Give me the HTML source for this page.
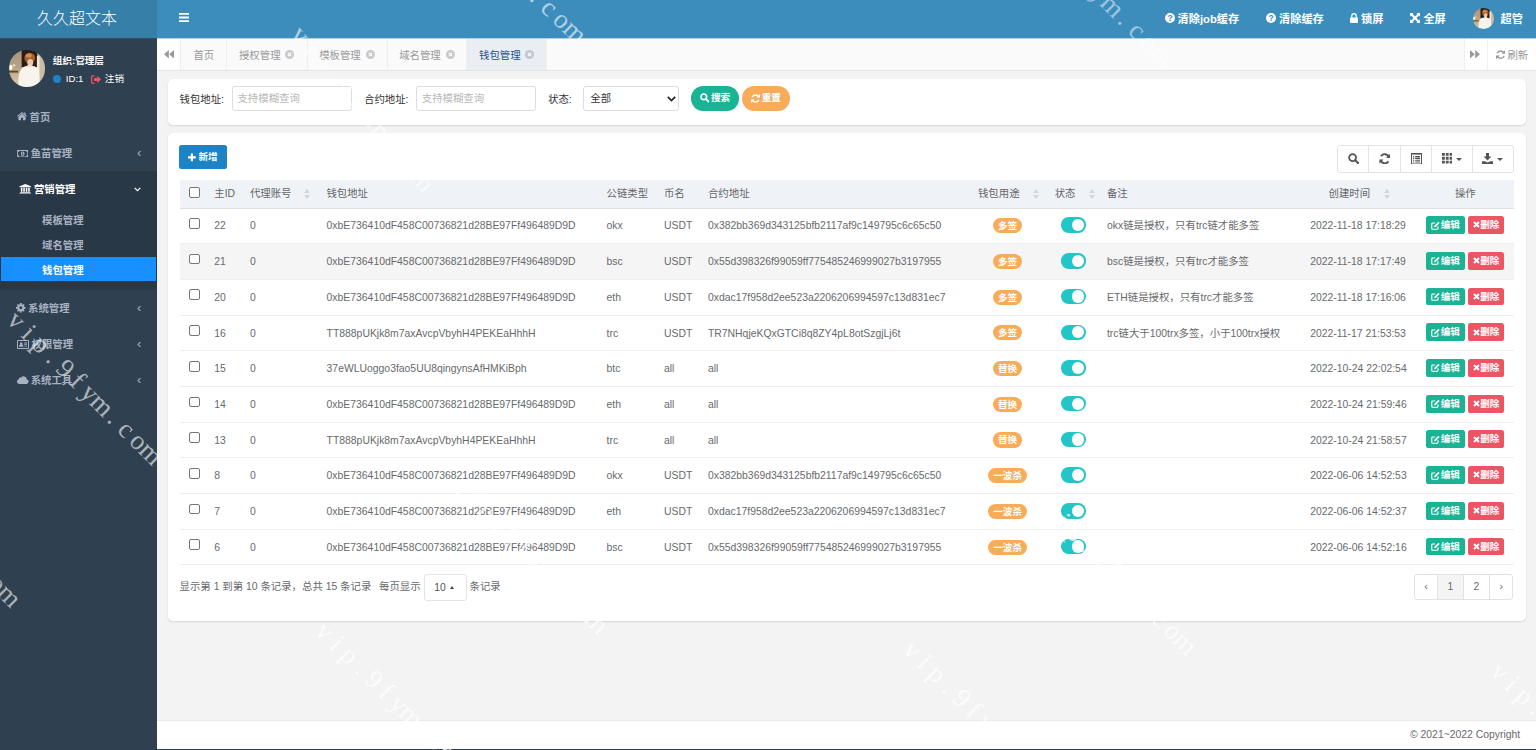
<!DOCTYPE html>
<html lang="zh-CN">
<head>
<meta charset="utf-8">
<title>久久超文本</title>
<style>
*{box-sizing:border-box;margin:0;padding:0}
html,body{width:1536px;height:750px;overflow:hidden}
body{font-family:"Liberation Sans","Noto Sans CJK SC",sans-serif;font-size:12px;color:#676a6c;background:#f3f3f4;position:relative}
svg{display:block}
.abs{position:absolute}
/* sidebar */
#side{position:absolute;left:0;top:0;width:157px;height:750px;background:#2f4050;overflow:hidden}
#logo{position:absolute;left:0;top:0;width:157px;height:38.400px;background:#367fa9;color:#fff;font-size:16px;font-weight:300;line-height:38.800px;text-align:center;padding-right:3px}
#user{position:absolute;left:0;top:38px;width:157px;height:60px}
#avatar{position:absolute;left:8.700px;top:12.300px;width:36.400px;height:36.400px;border-radius:50%;overflow:hidden}
#uname{position:absolute;left:52.800px;top:15.500px;color:#fff;font-weight:bold;font-size:9.600px;line-height:14px;white-space:nowrap}
#uinfo{position:absolute;left:52.800px;top:34.300px;width:100px;height:14px;color:#fff;font-size:9.600px;line-height:14px;white-space:nowrap}
#uinfo .dot{position:absolute;left:0;top:3px;width:8px;height:8px;border-radius:50%;background:#1c84c6}
.mi{position:absolute;left:0;width:157px;height:36px;color:#a7b1c2;font-weight:bold;font-size:10.400px;line-height:38px;white-space:nowrap}
.mi .ic{position:absolute}
.mi .tx{position:absolute;top:0}
.mi .ar{position:absolute;left:137px;top:-1px;font-weight:normal;font-size:13px;font-family:"Liberation Sans",sans-serif}
#open{position:absolute;left:0;top:171px;width:157px;height:119px;background:#293846}
.sub{position:absolute;left:0;width:157px;height:24.500px;line-height:26.300px;color:#a7b1c2;font-weight:bold;font-size:10.400px;padding-left:42px;white-space:nowrap}
.sub.on{left:1px;width:154.500px;padding-left:41px;background:#1890ff;color:#fff}
/* header */
#top{position:absolute;left:157px;top:0;width:1379px;height:38.400px;background:#3c8dbc;color:#fff}
.tl{position:absolute;top:0;height:38px;line-height:38.500px;font-size:11.200px;font-weight:bold;color:#fff;white-space:nowrap}
/* tabs */
#tabs{position:absolute;left:157px;top:38.400px;width:1379px;height:32.300px;background:#fafafa;border-bottom:1px solid #e4e4e4}
.tb{position:absolute;top:0;height:31.300px;line-height:35.400px;background:#fafafa;border-right:1px solid #f0f0f0;color:#999;font-size:10.400px;white-space:nowrap;text-align:center}
.tb.t4{text-align:left;padding-left:12.600px}
.tb.t4 .x{position:absolute;left:58px;top:11.500px}
.tb.t4.on .x{left:58.400px}
.tb.on{background:#eaedf1;color:#23508e}
/* cards */
.card{position:absolute;background:#fff;border-radius:5px;box-shadow:0 1px 2px rgba(0,0,0,.13)}
.lb{position:absolute;top:8px;height:24px;line-height:26px;color:#333;font-size:10.400px;white-space:nowrap}
.inp{position:absolute;top:7.700px;height:24.400px;width:120px;border:1px solid #ddd;border-radius:3px;background:#fff;color:#b8b8b8;font-size:10.400px;line-height:23.500px;padding-left:4.800px;white-space:nowrap}
.pill{position:absolute;top:7.700px;height:24.400px;border-radius:12.200px;color:#fff;font-size:9.600px;font-weight:bold;line-height:23px;white-space:nowrap}
/* table */
.nb{position:absolute;left:11.700px;top:12.700px;width:47.600px;height:23.500px;border-radius:2.500px;background:#1c84c6;color:#fff;font-size:9.600px;font-weight:bold;line-height:23px;white-space:nowrap}
#tools{position:absolute;left:1169.500px;top:12.500px;width:176.800px;height:28px;border:1px solid #e3e3e3;border-radius:3px;background:#fff}
#tools>div{position:absolute;top:0;height:26px;border-right:1px solid #e3e3e3}
.ct{position:absolute;top:11.600px;width:0;height:0;border-left:3px solid transparent;border-right:3px solid transparent;border-top:3.500px solid #555}
#tbl{position:absolute;left:12.100px;top:47.700px;width:1334px;height:386px}
.th{position:absolute;left:0;top:0;width:1334px;height:28.400px;background:#eff3f8;border-bottom:1.400px solid #dde0e4;z-index:1}
.th span{position:absolute;top:0;line-height:28.200px;color:#666;white-space:nowrap;font-size:10.400px}
.tr{position:absolute;left:0;width:1334px;height:35.710px;border-bottom:1px solid #eceef0}
.tr.alt{background:#f5f5f5}
.tr span{position:absolute;top:0;line-height:35px;white-space:nowrap;color:#676a6c;font-size:10.400px}
.cb{position:absolute;left:9.700px;width:10.600px;height:10.600px;border:1px solid #767676;border-radius:2px;background:#fff}
.bdg{position:absolute;top:9.800px;height:15.200px;border-radius:7.600px;background:#f8ac59;color:#fff;font-size:9.600px;font-weight:bold;line-height:15.400px;text-align:center;white-space:nowrap}
.tg{position:absolute;left:881.900px;top:9.100px;width:24.200px;height:15.400px;border-radius:7.700px;background:#23c6c8}
.tg i{position:absolute;right:1.600px;top:1.600px;width:12.200px;height:12.200px;border-radius:50%;background:#fff}
.be,.bd{position:absolute;top:7.800px;height:17.800px;border-radius:2.600px;color:#fff;font-size:9.600px;font-weight:bold;line-height:18.200px;white-space:nowrap;padding-left:14.700px}
.be{left:1246.400px;width:38.600px;background:#1ab394}
.bd{left:1288.200px;width:36px;background:#ed5565;padding-left:12.500px}
.bi{position:absolute;left:5px;top:5.300px}
.so{position:absolute;top:8.700px;width:6px;height:11px}
.so:before,.so:after{content:"";position:absolute;left:0;border-left:3px solid transparent;border-right:3px solid transparent}
.so:before{top:0;border-bottom:4.800px solid #d3d7dd}
.so:after{top:6.200px;border-top:4.800px solid #d3d7dd}
.pg{position:absolute;top:442px;height:26.500px;line-height:24px;font-size:10.400px;color:#676a6c;white-space:nowrap}
#psz{position:absolute;left:256px;top:441.600px;width:43px;height:27px;border:1px solid #e3e3e3;border-radius:3px;background:#fff;font-size:10.400px;line-height:25px;color:#555}
.cu{position:absolute;left:25.700px;top:11.200px;width:0;height:0;border-left:2.800px solid transparent;border-right:2.800px solid transparent;border-bottom:3.200px solid #444}
#pager{position:absolute;left:1246.800px;top:441px;width:99.200px;height:26.400px;border:1px solid #e2e2e2;border-radius:3px;background:#fff;overflow:hidden}
#pager span{position:absolute;top:0;height:24.500px;line-height:23.500px;text-align:center;border-right:1px solid #e2e2e2;color:#676a6c;font-size:10.400px}
#pager span.on{background:#f4f4f4}
#foot{position:absolute;left:157px;top:719.700px;width:1379px;height:30.300px;background:#fff;border-top:1px solid #e7eaec;border-bottom:1.400px solid #2f4050;color:#676a6c;font-size:10.400px;line-height:27px;text-align:right;padding-right:15.800px}
.wm{position:absolute;font-family:"Liberation Serif","Noto Serif CJK SC",serif;font-size:27px;color:#fff;white-space:nowrap;transform-origin:0 0;transform:rotate(52deg);letter-spacing:2.5px;pointer-events:none}
</style>
</head>
<body>
<div id="side">
  <div id="logo">久久超文本</div>
  <div id="user">
    <div id="avatar"><svg width="36.400" height="36.400" viewBox="0 0 36 36"><defs><filter id="bl" x="-10%" y="-10%" width="120%" height="120%"><feGaussianBlur stdDeviation="0.7"/></filter><linearGradient id="avl" x1="0" y1="0" x2="0" y2="1"><stop offset="0" stop-color="#a8937a"/><stop offset=".5" stop-color="#b9a386"/><stop offset="1" stop-color="#e3d0b3"/></linearGradient><g id="avg" filter="url(#bl)"><rect x="-2" y="-2" width="40" height="40" fill="url(#avl)"/><rect x="12.500" y="-2" width="16" height="19" fill="#2a1f17"/><rect x="28" y="-2" width="10" height="40" fill="#cbbda4"/><rect x="27.600" y="6" width="2.600" height="16" fill="#efe7d4"/><rect x="-2" y="20.500" width="11" height="1.800" fill="#5b4732"/><ellipse cx="1.800" cy="17.300" rx="1.700" ry="2.600" fill="#fffdf0"/><ellipse cx="5" cy="15.200" rx="1.300" ry="1.200" fill="#f3e2b0"/><ellipse cx="20.500" cy="8" rx="5.300" ry="5.400" fill="#a85f2c"/><ellipse cx="19.500" cy="5.500" rx="3" ry="2" fill="#c98d60"/><ellipse cx="21" cy="12.400" rx="2.900" ry="3.500" fill="#e8c6ad"/><path d="M9.400 38C8.800 27 9.800 18.500 15 16.600 18 15.300 24 15.400 27 17 31 19 30.600 28 30 38Z" fill="#f7f4ec"/><path d="M17.500 16.500C18 14 23 14 23.500 16.500" fill="#f1dccb"/></g></defs><use href="#avg"/></svg></div>
    <div id="uname">组织:管理层</div>
    <div id="uinfo"><i class="dot"></i><span style="position:absolute;left:13px;top:0">ID:1</span><svg style="position:absolute;left:38px;top:3px" width="10" height="9" viewBox="0 0 10 9"><path d="M3.6 0.2H1.6C.7.2 0 .9 0 1.8v5.4C0 8.100.7 8.800 1.600 8.800h2V7.500H1.700c-.3 0-.5-.2-.5-.5V2c0-.3.2-.5.5-.5h1.900z" fill="#ed5565"/><path d="M6.300.8 10 4.500 6.300 8.200V6H3V3h3.300z" fill="#ed5565"/></svg><span style="position:absolute;left:52px;top:0">注销</span></div>
  </div>
  <div class="mi" style="top:99px"><svg class="ic" style="left:16.600px;top:13.400px" width="10" height="8.200" viewBox="0 0 11 9"><path d="M5.500 1.900 1.500 5.100V8.500c0 .3.200.5.500.5H4.400V6.200H6.600V9H9c.3 0 .5-.2.500-.5V5.100z" fill="#a7b1c2"/><path d="M5.500 0 0 4.400l.7.900L5.500 1.500l4.800 3.800.7-.9L9.400 3.100V.6H7.900V1.900z" fill="#a7b1c2"/></svg><span class="tx" style="left:29.500px">首页</span></div>
  <div class="mi" style="top:135px"><svg class="ic" style="left:16.600px;top:14.600px" width="11.400" height="7.400" viewBox="0 0 12 8"><path d="M0 0h12v8H0zM1 2.200V5.800C1.700 5.800 2.200 6.300 2.200 7H9.800C9.800 6.300 10.300 5.800 11 5.800V2.200C10.300 2.200 9.800 1.700 9.800 1H2.200C2.200 1.700 1.700 2.200 1 2.200z" fill="#a7b1c2" fill-rule="evenodd"/><ellipse cx="6" cy="4" rx="2" ry="2.500" fill="#a7b1c2"/><path d="M5.400 2.800h.9v2.100h.5v.6H5.200v-.6h.5V3.600h-.5z" fill="#2f4050"/></svg><span class="tx" style="left:30.700px">鱼苗管理</span><span class="ar">&#8249;</span></div>
  <div id="open"></div>
  <div class="mi" style="top:171px;color:#fff"><svg class="ic" style="left:18.700px;top:13.200px" width="12.600" height="10.200" viewBox="0 0 13 11"><path d="M6.500 0 13 2.600V3.400H0V2.600zM1.700 4.100H3.400V8.500H1.700zM4.300 4.100H6V8.500H4.300zM7 4.100H8.700V8.500H7zM9.600 4.100H11.300V8.500H9.600zM.9 9H12.100V9.800H.9zM0 10.200H13V11H0z" fill="#fff"/></svg><span class="tx" style="left:33.900px">营销管理</span><svg class="abs" style="left:134px;top:15.500px" width="7" height="5" viewBox="0 0 7 5"><path d="M.7.900 3.500 3.700 6.300.9" fill="none" stroke="#fff" stroke-width="1.200"/></svg></div>
  <div class="sub" style="top:207.800px">模板管理</div>
  <div class="sub" style="top:232.500px">域名管理</div>
  <div class="sub on" style="top:256.500px;height:24.900px;line-height:27px">钱包管理</div>
  <div class="mi" style="top:290px"><svg class="ic" style="left:16.300px;top:13.200px" width="9.600" height="9.600" viewBox="0 0 9 9"><path d="M3.700 0H5.300L5.500 1.200 6.300 1.600 7.300.9 8.100 1.700 7.400 2.700 7.800 3.500 9 3.700V5.300L7.800 5.500 7.400 6.300 8.100 7.300 7.300 8.100 6.300 7.400 5.500 7.800 5.300 9H3.700L3.500 7.800 2.700 7.400 1.700 8.100.9 7.300 1.600 6.300 1.200 5.500 0 5.300V3.700L1.200 3.500 1.600 2.700.9 1.700 1.700.9 2.700 1.600 3.500 1.200zM4.500 3.100A1.400 1.400 0 1 0 4.500 5.900 1.400 1.400 0 1 0 4.500 3.100z" fill="#a7b1c2" fill-rule="evenodd"/></svg><span class="tx" style="left:28px">系统管理</span><span class="ar">&#8249;</span></div>
  <div class="mi" style="top:326px"><svg class="ic" style="left:16.500px;top:13.500px" width="12" height="9" viewBox="0 0 12 9"><path d="M.8 0H11.200C11.600 0 12 .4 12 .8V8.200C12 8.600 11.600 9 11.200 9H.8C.4 9 0 8.600 0 8.200V.8C0 .4.400 0 .8 0zM1 1V8H11V1z" fill="#a7b1c2" fill-rule="evenodd"/><path d="M2 6.800C2 5.300 2.600 4.800 3.300 4.600A1.300 1.300 0 1 1 5.100 4.600C5.800 4.800 6.400 5.300 6.400 6.800zM7.200 2.600H10V3.400H7.200zM7.200 4.200H10V5H7.200zM7.200 5.800H10V6.600H7.200z" fill="#a7b1c2"/></svg><span class="tx" style="left:31.500px">权限管理</span><span class="ar">&#8249;</span></div>
  <div class="mi" style="top:362px"><svg class="ic" style="left:16.500px;top:14px" width="12" height="8" viewBox="0 0 12 8"><path d="M9.700 3.300A2.400 2.400 0 0 1 9.600 8H2.400A2.400 2.400 0 0 1 1.700 3.300 2 2 0 0 1 4.200 1.600 3 3 0 0 1 9.700 3.300z" fill="#a7b1c2"/></svg><span class="tx" style="left:30.700px">系统工具</span><span class="ar">&#8249;</span></div>
</div>
<div id="top">
  <svg class="abs" style="left:21.700px;top:13px" width="10.500" height="9" viewBox="0 0 11 9" preserveAspectRatio="none"><path d="M0 0H11V1.800H0zM0 3.600H11V5.400H0zM0 7.200H11V9H0z" fill="#fff"/></svg>
  <svg class="abs" style="left:1007.600px;top:13.300px" width="10" height="10" viewBox="0 0 10 10"><circle cx="5" cy="5" r="5" fill="#fff"/><text x="5" y="8.300" font-size="8.500" font-weight="bold" text-anchor="middle" fill="#3c8dbc" font-family="Liberation Sans,sans-serif">?</text></svg>
  <span class="tl" style="left:1020.600px">清除job缓存</span>
  <svg class="abs" style="left:1109px;top:13.300px" width="10" height="10" viewBox="0 0 10 10"><circle cx="5" cy="5" r="5" fill="#fff"/><text x="5" y="8.300" font-size="8.500" font-weight="bold" text-anchor="middle" fill="#3c8dbc" font-family="Liberation Sans,sans-serif">?</text></svg>
  <span class="tl" style="left:1122px">清除缓存</span>
  <svg class="abs" style="left:1193px;top:12.800px" width="8" height="10" viewBox="0 0 8 10"><path d="M0 4.500H8V9.300C8 9.700 7.700 10 7.300 10H.7C.3 10 0 9.700 0 9.300z" fill="#fff"/><path d="M1.800 4.800V2.900A2.200 2.200 0 0 1 6.200 2.900V4.800" fill="none" stroke="#fff" stroke-width="1.300"/></svg>
  <span class="tl" style="left:1204px">锁屏</span>
  <svg class="abs" style="left:1253px;top:13.200px" width="10" height="10" viewBox="0 0 10 10"><path d="M0 0H3.600L2.500 1.100 5 3.600 7.500 1.100 6.400 0H10V3.600L8.900 2.500 6.400 5 8.900 7.500 10 6.400V10H6.400L7.500 8.900 5 6.400 2.500 8.900 3.600 10H0V6.400L1.100 7.500 3.600 5 1.100 2.500 0 3.600z" fill="#fff"/></svg>
  <span class="tl" style="left:1266.400px">全屏</span>
  <div class="abs" style="left:1315.600px;top:7.900px;width:21.600px;height:21.600px;border-radius:50%;overflow:hidden"><svg width="21.600" height="21.600" viewBox="0 0 36 36"><use href="#avg"/></svg></div>
  <span class="tl" style="left:1343.500px">超管</span>
</div>
<div class="abs" style="left:0;top:38px;width:157px;height:1px;background:#32597a;opacity:.5"></div><div class="abs" style="left:157px;top:38px;width:1379px;height:1px;background:#b1d1e4;z-index:2"></div>
<div id="tabs">
  <div class="tb" style="left:0;width:24.200px;background:#fff"><svg class="abs" style="left:7.200px;top:11.800px" width="10" height="8.500" viewBox="0 0 10 8.500"><path d="M4.800 0V8.500L0 4.250zM10 0V8.500L5.200 4.250z" fill="#999"/></svg></div>
  <div class="tb" style="left:24.200px;width:46.200px">首页</div>
  <div class="tb t4" style="left:70.400px;width:80.200px;padding-left:11.600px"><span>授权管理</span><svg class="x" width="9" height="9" viewBox="0 0 9 9"><circle cx="4.500" cy="4.500" r="4.500" fill="#c9c9c9"/><path d="M2.900 2.900 6.100 6.100M6.100 2.900 2.900 6.100" stroke="#fff" stroke-width="1.200"/></svg></div>
  <div class="tb t4" style="left:150.600px;width:80px;padding-left:11.600px"><span>模板管理</span><svg class="x" width="9" height="9" viewBox="0 0 9 9"><circle cx="4.500" cy="4.500" r="4.500" fill="#c9c9c9"/><path d="M2.900 2.900 6.100 6.100M6.100 2.900 2.900 6.100" stroke="#fff" stroke-width="1.200"/></svg></div>
  <div class="tb t4" style="left:230.600px;width:79.600px;padding-left:11.600px"><span>域名管理</span><svg class="x" width="9" height="9" viewBox="0 0 9 9"><circle cx="4.500" cy="4.500" r="4.500" fill="#c9c9c9"/><path d="M2.900 2.900 6.100 6.100M6.100 2.900 2.900 6.100" stroke="#fff" stroke-width="1.200"/></svg></div>
  <div class="tb t4 on" style="left:310px;width:80px;padding-left:12px"><span>钱包管理</span><svg class="x" width="9" height="9" viewBox="0 0 9 9"><circle cx="4.500" cy="4.500" r="4.500" fill="#c3c8d0"/><path d="M2.900 2.900 6.100 6.100M6.100 2.900 2.900 6.100" stroke="#fff" stroke-width="1.200"/></svg></div>
  <div class="tb" style="left:1306.600px;width:24.800px;border-left:1px solid #eee;background:#fff"><svg class="abs" style="left:5.800px;top:11.800px" width="10" height="8.500" viewBox="0 0 10 8.500"><path d="M0 0V8.500L4.800 4.250zM5.200 0V8.500L10 4.250z" fill="#999"/></svg></div>
  <div class="tb" style="left:1331.400px;width:47.600px;border-right:0;background:#fff"><svg class="abs" style="left:7.500px;top:11.700px" width="9.300" height="9.300" viewBox="0 0 10 10"><path d="M8.600 3.300A4 4 0 0 0 1.300 3.600M1.400 6.700A4 4 0 0 0 8.700 6.400" fill="none" stroke="#999" stroke-width="1.500"/><path d="M10 0V4H6zM0 10V6H4z" fill="#999"/></svg><span class="abs" style="left:19px;top:0">刷新</span></div>
</div>
<div class="card" id="c1" style="left:167.500px;top:78.800px;width:1358px;height:46.200px">
  <span class="lb" style="left:12px">钱包地址:</span>
  <div class="inp" style="left:64.200px">支持模糊查询</div>
  <span class="lb" style="left:196.500px">合约地址:</span>
  <div class="inp" style="left:248.500px">支持模糊查询</div>
  <span class="lb" style="left:380.500px">状态:</span>
  <div class="inp" style="left:415.500px;width:95.800px;color:#333;padding-left:6.300px">全部<svg class="abs" style="left:83px;top:8.500px" width="9" height="6" viewBox="0 0 9 6"><path d="M.8.900 4.500 4.600 8.200.9" fill="none" stroke="#222" stroke-width="1.700"/></svg></div>
  <div class="pill" style="left:523.300px;width:48.400px;background:#1ab394"><svg class="abs" style="left:8.800px;top:7px" width="9.500" height="9.500" viewBox="0 0 10 10"><circle cx="4" cy="4" r="3" fill="none" stroke="#fff" stroke-width="1.700"/><path d="M6.200 6.200 9.300 9.300" stroke="#fff" stroke-width="1.900" stroke-linecap="round"/></svg><span class="abs" style="left:20.200px;top:0">搜索</span></div>
  <div class="pill" style="left:574.800px;width:47.500px;background:#f8ac59"><svg class="abs" style="left:8.500px;top:7.500px" width="9" height="9" viewBox="0 0 10 10"><path d="M8.600 3.300A4 4 0 0 0 1.300 3.600M1.400 6.700A4 4 0 0 0 8.700 6.400" fill="none" stroke="#fff" stroke-width="1.700"/><path d="M10 0V4H6zM0 10V6H4z" fill="#fff"/></svg><span class="abs" style="left:19.400px;top:0">重置</span></div>
</div>
<div class="card" id="c2" style="left:167.500px;top:132.600px;width:1358px;height:488px">
<div class="nb"><svg class="abs" style="left:8.800px;top:5.600px" width="8.200" height="12.800" viewBox="0 0 9 14"><path d="M3.100 4.500V7.500H0V9.900H3.100V12.900H5.500V9.900H8.600V7.500H5.500V4.500z" fill="#fff" transform="translate(0,-1.800)"/></svg><span class="abs" style="left:19.200px;top:0">新增</span></div>
<div id="tools">
  <div style="left:0;width:30.800px"><svg class="abs" style="left:9.800px;top:6.800px" width="11.500" height="11.500" viewBox="0 0 11 11"><circle cx="4.400" cy="4.400" r="3.300" fill="none" stroke="#555" stroke-width="1.700"/><path d="M6.900 6.900 10 10" stroke="#555" stroke-width="2" stroke-linecap="round"/></svg></div>
  <div style="left:30.800px;width:31.800px"><svg class="abs" style="left:10px;top:6.800px" width="11.500" height="11.500" viewBox="0 0 11 11"><path d="M9.400 4.200A4.100 4.100 0 0 0 2 3M1.600 6.800A4.100 4.100 0 0 0 9 8" fill="none" stroke="#555" stroke-width="1.800"/><path d="M10.600.8V4.700H6.700zM.4 10.200V6.300H4.300z" fill="#555"/></svg></div>
  <div style="left:62.600px;width:31.300px"><svg class="abs" style="left:10px;top:6.800px" width="11" height="11.500" viewBox="0 0 11 11.500"><path d="M.5.500H10.500V11H.5z" fill="none" stroke="#555" stroke-width="1"/><path d="M0 0H11V1.600H0z" fill="#555"/><path d="M2 3.600H3.200M4.200 3.600H9M2 5.400H3.200M4.200 5.400H9M2 7.200H3.200M4.200 7.200H9M2 9H3.200M4.200 9H9" stroke="#555" stroke-width="1.100"/></svg></div>
  <div style="left:93.900px;width:40.900px"><svg class="abs" style="left:9.800px;top:7.300px" width="10.500" height="10.500" viewBox="0 0 10 10"><path d="M0 0H2.700V2.700H0zM3.650 0H6.350V2.700H3.650zM7.300 0H10V2.700H7.300zM0 3.650H2.700V6.350H0zM3.650 3.650H6.350V6.350H3.650zM7.300 3.650H10V6.350H7.300zM0 7.300H2.700V10H0zM3.650 7.300H6.350V10H3.650zM7.300 7.300H10V10H7.300z" fill="#555"/></svg><i class="ct" style="left:24.300px"></i></div>
  <div style="left:134.800px;width:40px;border-right:0"><svg class="abs" style="left:9.300px;top:6.600px" width="11" height="11.500" viewBox="0 0 11 11.500"><path d="M4 0H7V3.600H9.400L5.500 7.600 1.600 3.600H4zM0 8.300H2.800L5.500 9.600 8.200 8.300H11V11.500H0z" fill="#555"/></svg><i class="ct" style="left:24.600px"></i></div>
</div>
<div id="tbl">
<div class="th"><i class="cb" style="top:6.800px"></i><span style="left:34.7px">主ID</span><span style="left:70.3px">代理账号</span><i class="so" style="left:124.9px"></i><span style="left:146.8px">钱包地址</span><span style="left:427.0px">公链类型</span><span style="left:484.4px">币名</span><span style="left:528.4px">合约地址</span><span style="left:798.4px">钱包用途</span><i class="so" style="left:853.4px"></i><span style="left:875.1px">状态</span><i class="so" style="left:909.4px"></i><span style="left:927.4px">备注</span><span style="left:1149.0px">创建时间</span><i class="so" style="left:1204.1px"></i><span style="left:1275.4px">操作</span></div>
<div class="tr" style="top:28.10px"><i class="cb" style="top:9.700px"></i><span style="left:34.7px">22</span><span style="left:70.3px">0</span><span style="left:147.0px">0xbE736410dF458C00736821d28BE97Ff496489D9D</span><span style="left:427.0px">okx</span><span style="left:484.4px">USDT</span><span style="left:528.4px">0x382bb369d343125bfb2117af9c149795c6c65c50</span><b class="bdg" style="left:813.3px;width:29.4px">多签</b><i class="tg"><i></i></i><span style="left:927.4px">okx链是授权，只有trc链才能多签</span><span style="left:1130.6px">2022-11-18 17:18:29</span><b class="be"><svg class="bi" style="left:5px;top:4.400px" width="9" height="9" viewBox="0 0 8 8"><path d="M6.200 4.600V6.600C6.200 7 5.900 7.300 5.500 7.300H1.400C1 7.300.700 7 .700 6.600V2.500C.700 2.100 1 1.800 1.400 1.800H3.700" fill="none" stroke="#fff" stroke-width="1"/><path d="M3 4.200 6.600.600 7.700 1.700 4.100 5.300 2.800 5.500z" fill="#fff"/></svg>编辑</b><b class="bd"><svg class="bi" width="7" height="7" viewBox="0 0 7 7"><path d="M1 1 6 6M6 1 1 6" stroke="#fff" stroke-width="1.900"/></svg>删除</b></div>
<div class="tr alt" style="top:63.81px"><i class="cb" style="top:9.700px"></i><span style="left:34.7px">21</span><span style="left:70.3px">0</span><span style="left:147.0px">0xbE736410dF458C00736821d28BE97Ff496489D9D</span><span style="left:427.0px">bsc</span><span style="left:484.4px">USDT</span><span style="left:528.4px">0x55d398326f99059ff775485246999027b3197955</span><b class="bdg" style="left:813.3px;width:29.4px">多签</b><i class="tg"><i></i></i><span style="left:927.4px">bsc链是授权，只有trc才能多签</span><span style="left:1130.6px">2022-11-18 17:17:49</span><b class="be"><svg class="bi" style="left:5px;top:4.400px" width="9" height="9" viewBox="0 0 8 8"><path d="M6.200 4.600V6.600C6.200 7 5.900 7.300 5.500 7.300H1.400C1 7.300.700 7 .700 6.600V2.500C.700 2.100 1 1.800 1.400 1.800H3.700" fill="none" stroke="#fff" stroke-width="1"/><path d="M3 4.200 6.600.600 7.700 1.700 4.100 5.300 2.800 5.500z" fill="#fff"/></svg>编辑</b><b class="bd"><svg class="bi" width="7" height="7" viewBox="0 0 7 7"><path d="M1 1 6 6M6 1 1 6" stroke="#fff" stroke-width="1.900"/></svg>删除</b></div>
<div class="tr" style="top:99.52px"><i class="cb" style="top:9.700px"></i><span style="left:34.7px">20</span><span style="left:70.3px">0</span><span style="left:147.0px">0xbE736410dF458C00736821d28BE97Ff496489D9D</span><span style="left:427.0px">eth</span><span style="left:484.4px">USDT</span><span style="left:528.4px">0xdac17f958d2ee523a2206206994597c13d831ec7</span><b class="bdg" style="left:813.3px;width:29.4px">多签</b><i class="tg"><i></i></i><span style="left:927.4px">ETH链是授权，只有trc才能多签</span><span style="left:1130.6px">2022-11-18 17:16:06</span><b class="be"><svg class="bi" style="left:5px;top:4.400px" width="9" height="9" viewBox="0 0 8 8"><path d="M6.200 4.600V6.600C6.200 7 5.900 7.300 5.500 7.300H1.400C1 7.300.700 7 .700 6.600V2.500C.700 2.100 1 1.800 1.400 1.800H3.700" fill="none" stroke="#fff" stroke-width="1"/><path d="M3 4.200 6.600.600 7.700 1.700 4.100 5.300 2.800 5.500z" fill="#fff"/></svg>编辑</b><b class="bd"><svg class="bi" width="7" height="7" viewBox="0 0 7 7"><path d="M1 1 6 6M6 1 1 6" stroke="#fff" stroke-width="1.900"/></svg>删除</b></div>
<div class="tr" style="top:135.23px"><i class="cb" style="top:9.700px"></i><span style="left:34.7px">16</span><span style="left:70.3px">0</span><span style="left:147.0px">TT888pUKjk8m7axAvcpVbyhH4PEKEaHhhH</span><span style="left:427.0px">trc</span><span style="left:484.4px">USDT</span><span style="left:528.4px">TR7NHqjeKQxGTCi8q8ZY4pL8otSzgjLj6t</span><b class="bdg" style="left:813.3px;width:29.4px">多签</b><i class="tg"><i></i></i><span style="left:927.4px">trc链大于100trx多签，小于100trx授权</span><span style="left:1130.6px">2022-11-17 21:53:53</span><b class="be"><svg class="bi" style="left:5px;top:4.400px" width="9" height="9" viewBox="0 0 8 8"><path d="M6.200 4.600V6.600C6.200 7 5.900 7.300 5.500 7.300H1.400C1 7.300.700 7 .700 6.600V2.500C.700 2.100 1 1.800 1.400 1.800H3.700" fill="none" stroke="#fff" stroke-width="1"/><path d="M3 4.200 6.600.600 7.700 1.700 4.100 5.300 2.800 5.500z" fill="#fff"/></svg>编辑</b><b class="bd"><svg class="bi" width="7" height="7" viewBox="0 0 7 7"><path d="M1 1 6 6M6 1 1 6" stroke="#fff" stroke-width="1.900"/></svg>删除</b></div>
<div class="tr" style="top:170.94px"><i class="cb" style="top:9.700px"></i><span style="left:34.7px">15</span><span style="left:70.3px">0</span><span style="left:147.0px">37eWLUoggo3fao5UU8qingynsAfHMKiBph</span><span style="left:427.0px">btc</span><span style="left:484.4px">all</span><span style="left:528.4px">all</span><b class="bdg" style="left:813.3px;width:29.4px">替换</b><i class="tg"><i></i></i><span style="left:1130.6px">2022-10-24 22:02:54</span><b class="be"><svg class="bi" style="left:5px;top:4.400px" width="9" height="9" viewBox="0 0 8 8"><path d="M6.200 4.600V6.600C6.200 7 5.900 7.300 5.500 7.300H1.400C1 7.300.700 7 .700 6.600V2.500C.700 2.100 1 1.800 1.400 1.800H3.700" fill="none" stroke="#fff" stroke-width="1"/><path d="M3 4.200 6.600.600 7.700 1.700 4.100 5.300 2.800 5.500z" fill="#fff"/></svg>编辑</b><b class="bd"><svg class="bi" width="7" height="7" viewBox="0 0 7 7"><path d="M1 1 6 6M6 1 1 6" stroke="#fff" stroke-width="1.900"/></svg>删除</b></div>
<div class="tr" style="top:206.65px"><i class="cb" style="top:9.700px"></i><span style="left:34.7px">14</span><span style="left:70.3px">0</span><span style="left:147.0px">0xbE736410dF458C00736821d28BE97Ff496489D9D</span><span style="left:427.0px">eth</span><span style="left:484.4px">all</span><span style="left:528.4px">all</span><b class="bdg" style="left:813.3px;width:29.4px">替换</b><i class="tg"><i></i></i><span style="left:1130.6px">2022-10-24 21:59:46</span><b class="be"><svg class="bi" style="left:5px;top:4.400px" width="9" height="9" viewBox="0 0 8 8"><path d="M6.200 4.600V6.600C6.200 7 5.900 7.300 5.500 7.300H1.400C1 7.300.700 7 .700 6.600V2.500C.700 2.100 1 1.800 1.400 1.800H3.700" fill="none" stroke="#fff" stroke-width="1"/><path d="M3 4.200 6.600.600 7.700 1.700 4.100 5.300 2.800 5.500z" fill="#fff"/></svg>编辑</b><b class="bd"><svg class="bi" width="7" height="7" viewBox="0 0 7 7"><path d="M1 1 6 6M6 1 1 6" stroke="#fff" stroke-width="1.900"/></svg>删除</b></div>
<div class="tr" style="top:242.36px"><i class="cb" style="top:9.700px"></i><span style="left:34.7px">13</span><span style="left:70.3px">0</span><span style="left:147.0px">TT888pUKjk8m7axAvcpVbyhH4PEKEaHhhH</span><span style="left:427.0px">trc</span><span style="left:484.4px">all</span><span style="left:528.4px">all</span><b class="bdg" style="left:813.3px;width:29.4px">替换</b><i class="tg"><i></i></i><span style="left:1130.6px">2022-10-24 21:58:57</span><b class="be"><svg class="bi" style="left:5px;top:4.400px" width="9" height="9" viewBox="0 0 8 8"><path d="M6.200 4.600V6.600C6.200 7 5.900 7.300 5.500 7.300H1.400C1 7.300.700 7 .700 6.600V2.500C.700 2.100 1 1.800 1.400 1.800H3.700" fill="none" stroke="#fff" stroke-width="1"/><path d="M3 4.200 6.600.600 7.700 1.700 4.100 5.300 2.800 5.500z" fill="#fff"/></svg>编辑</b><b class="bd"><svg class="bi" width="7" height="7" viewBox="0 0 7 7"><path d="M1 1 6 6M6 1 1 6" stroke="#fff" stroke-width="1.900"/></svg>删除</b></div>
<div class="tr" style="top:278.07px"><i class="cb" style="top:9.700px"></i><span style="left:34.7px">8</span><span style="left:70.3px">0</span><span style="left:147.0px">0xbE736410dF458C00736821d28BE97Ff496489D9D</span><span style="left:427.0px">okx</span><span style="left:484.4px">USDT</span><span style="left:528.4px">0x382bb369d343125bfb2117af9c149795c6c65c50</span><b class="bdg" style="left:808.5px;width:39px">一波杀</b><i class="tg"><i></i></i><span style="left:1130.6px">2022-06-06 14:52:53</span><b class="be"><svg class="bi" style="left:5px;top:4.400px" width="9" height="9" viewBox="0 0 8 8"><path d="M6.200 4.600V6.600C6.200 7 5.900 7.300 5.500 7.300H1.400C1 7.300.700 7 .700 6.600V2.500C.700 2.100 1 1.800 1.400 1.800H3.700" fill="none" stroke="#fff" stroke-width="1"/><path d="M3 4.200 6.600.600 7.700 1.700 4.100 5.300 2.800 5.500z" fill="#fff"/></svg>编辑</b><b class="bd"><svg class="bi" width="7" height="7" viewBox="0 0 7 7"><path d="M1 1 6 6M6 1 1 6" stroke="#fff" stroke-width="1.900"/></svg>删除</b></div>
<div class="tr" style="top:313.78px"><i class="cb" style="top:9.700px"></i><span style="left:34.7px">7</span><span style="left:70.3px">0</span><span style="left:147.0px">0xbE736410dF458C00736821d28BE97Ff496489D9D</span><span style="left:427.0px">eth</span><span style="left:484.4px">USDT</span><span style="left:528.4px">0xdac17f958d2ee523a2206206994597c13d831ec7</span><b class="bdg" style="left:808.5px;width:39px">一波杀</b><i class="tg"><i></i></i><span style="left:1130.6px">2022-06-06 14:52:37</span><b class="be"><svg class="bi" style="left:5px;top:4.400px" width="9" height="9" viewBox="0 0 8 8"><path d="M6.200 4.600V6.600C6.200 7 5.900 7.300 5.500 7.300H1.400C1 7.300.700 7 .700 6.600V2.500C.700 2.100 1 1.800 1.400 1.800H3.700" fill="none" stroke="#fff" stroke-width="1"/><path d="M3 4.200 6.600.600 7.700 1.700 4.100 5.300 2.800 5.500z" fill="#fff"/></svg>编辑</b><b class="bd"><svg class="bi" width="7" height="7" viewBox="0 0 7 7"><path d="M1 1 6 6M6 1 1 6" stroke="#fff" stroke-width="1.900"/></svg>删除</b></div>
<div class="tr" style="top:349.49px"><i class="cb" style="top:9.700px"></i><span style="left:34.7px">6</span><span style="left:70.3px">0</span><span style="left:147.0px">0xbE736410dF458C00736821d28BE97Ff496489D9D</span><span style="left:427.0px">bsc</span><span style="left:484.4px">USDT</span><span style="left:528.4px">0x55d398326f99059ff775485246999027b3197955</span><b class="bdg" style="left:808.5px;width:39px">一波杀</b><i class="tg"><i></i></i><span style="left:1130.6px">2022-06-06 14:52:16</span><b class="be"><svg class="bi" style="left:5px;top:4.400px" width="9" height="9" viewBox="0 0 8 8"><path d="M6.200 4.600V6.600C6.200 7 5.900 7.300 5.500 7.300H1.400C1 7.300.700 7 .700 6.600V2.500C.700 2.100 1 1.800 1.400 1.800H3.700" fill="none" stroke="#fff" stroke-width="1"/><path d="M3 4.200 6.600.600 7.700 1.700 4.100 5.300 2.800 5.500z" fill="#fff"/></svg>编辑</b><b class="bd"><svg class="bi" width="7" height="7" viewBox="0 0 7 7"><path d="M1 1 6 6M6 1 1 6" stroke="#fff" stroke-width="1.900"/></svg>删除</b></div>
</div>
<div class="pg" style="left:12.100px">显示第 1 到第 10 条记录，总共 15 条记录</div>
<div class="pg" style="left:211.500px">每页显示</div>
<div id="psz"><span class="abs" style="left:9.800px;top:0">10</span><i class="cu"></i></div>
<div class="pg" style="left:302px">条记录</div>
<div id="pager"><span style="left:0;width:22.600px">&#8249;</span><span class="on" style="left:22.600px;width:26.200px">1</span><span style="left:48.800px;width:25.700px">2</span><span style="left:74.500px;width:23px;border-right:0">&#8250;</span></div>
</div>
<svg id="wm" width="1536" height="750" viewBox="0 0 1536 750" style="position:absolute;left:0;top:0;pointer-events:none;z-index:9" font-family="Liberation Serif,Noto Serif CJK SC,serif" font-size="27" font-weight="400" fill="#fff" text-anchor="middle"><text transform="translate(14.7,322.0) rotate(44.7)" x="0.0 17.2 34.4 51.6 68.8 86.0 103.2 120.4 137.6 154.8 172.0 189.2" y="6" fill-opacity="0.62">vip.9fym.com</text><text transform="translate(433.5,-100.3) rotate(43.8)" x="0.0 17.6 35.2 52.8 70.4 88.0 105.6 123.2 140.8 158.4 176.0 193.6" y="6" fill-opacity="0.62">vip.9fym.com</text><text transform="translate(1025.0,-78.8) rotate(45)" x="0.0 17.4 34.8 52.2 69.6 87.0 104.4 121.8 139.2 156.6 174.0 191.4" y="6.500" fill-opacity="0.5">vip.9fym.com</text><text transform="translate(-126.8,462.8) rotate(45)" x="0.0 17.3 34.6 51.9 69.2 86.5 103.8 121.1 138.4 155.7 173.0 190.3" y="6" fill-opacity="0.6">vip.9fym.com</text><text transform="translate(323.0,633.0) rotate(44.5)" x="0.0 17.3 34.6 51.9 69.2 86.5 103.8 121.1 138.4 155.7 173.0 190.3" y="6" fill-opacity="0.8">vip.9fym.com</text><text transform="translate(460.4,489.4) rotate(45)" x="0.0 17.3 34.6 51.9 69.2 86.5 103.8 121.1 138.4 155.7 173.0 190.3" y="6" fill-opacity="0.8">vip.9fym.com</text><text transform="translate(910.6,651.6) rotate(44.5)" x="0.0 17.3 34.6 51.9 69.2 86.5 103.8 121.1 138.4 155.7 173.0 190.3" y="6" fill-opacity="0.8">vip.9fym.com</text><text transform="translate(1048.9,510.4) rotate(45)" x="0.0 17.3 34.6 51.9 69.2 86.5 103.8 121.1 138.4 155.7 173.0 190.3" y="6" fill-opacity="0.8">vip.9fym.com</text><text transform="translate(1498.0,673.6) rotate(44.5)" x="0.0 17.3 34.6 51.9 69.2 86.5 103.8 121.1 138.4 155.7 173.0 190.3" y="6" fill-opacity="0.8">vip.9fym.com</text><text transform="translate(298.5,36.5) rotate(50)" x="0.0 17.3 34.6 51.9 69.2 86.5 103.8 121.1 138.4 155.7 173.0 190.3" y="6" fill-opacity="0.6">vip.9fym.com</text></svg>
<div id="foot">© 2021~2022 Copyright</div>
</body>
</html>
